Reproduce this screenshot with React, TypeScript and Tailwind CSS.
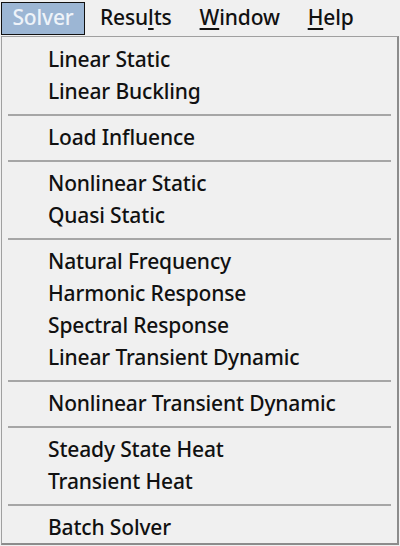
const groups: string[][] = [
  ["Linear Static", "Linear Buckling"],
  ["Load Influence"],
  ["Nonlinear Static", "Quasi Static"],
  ["Natural Frequency", "Harmonic Response", "Spectral Response", "Linear Transient Dynamic"],
  ["Nonlinear Transient Dynamic"],
  ["Steady State Heat", "Transient Heat"],
  ["Batch Solver"],
];

function BarItem({ label, mnemonic }: { label: string; mnemonic: number }) {
  return (
    <div className="px-[14px] h-[32px] flex items-center text-[#111]">
      {label.slice(0, mnemonic)}
      <span className="underline underline-offset-[3px] decoration-2">{label[mnemonic]}</span>
      {label.slice(mnemonic + 1)}
    </div>
  );
}

export default function App() {
  return (
    <div
      className="w-[400px] h-[546px] bg-[#f0f0f0] overflow-hidden text-[21px] font-medium tracking-[-0.15px]"
      style={{ fontFamily: '"Noto Sans", "Open Sans", sans-serif' }}
    >
      {/* menu bar */}
      <div className="h-[36px] flex items-center pl-[1px]">
        <div className="h-[33px] w-[84px] border border-[#111] bg-[#9cb6d4] text-[#eef3f9] flex items-center justify-center">
          Solver
        </div>
        <div className="ml-[1px] flex">
          <BarItem label="Results" mnemonic={4} />
          <BarItem label="Window" mnemonic={0} />
          <BarItem label="Help" mnemonic={0} />
        </div>
      </div>

      {/* dropdown */}
      <div className="ml-[1px] w-[398px] h-[509px] border-l border-t border-[#a0a0a0] border-r-2 border-b-2 border-r-[#8c8c8c] border-b-[#8c8c8c] pt-[7px]">
        {groups.map((items, gi) => (
          <div key={gi}>
            {gi > 0 && (
              <div className="h-[14px] flex items-center px-[6px]">
                <div className="w-full h-[2px] bg-[#a6a6a6]" />
              </div>
            )}
            {items.map((item) => (
              <div key={item} className="h-[32px] flex items-center pl-[46px] text-[#111]">
                {item}
              </div>
            ))}
          </div>
        ))}
      </div>
    </div>
  );
}
